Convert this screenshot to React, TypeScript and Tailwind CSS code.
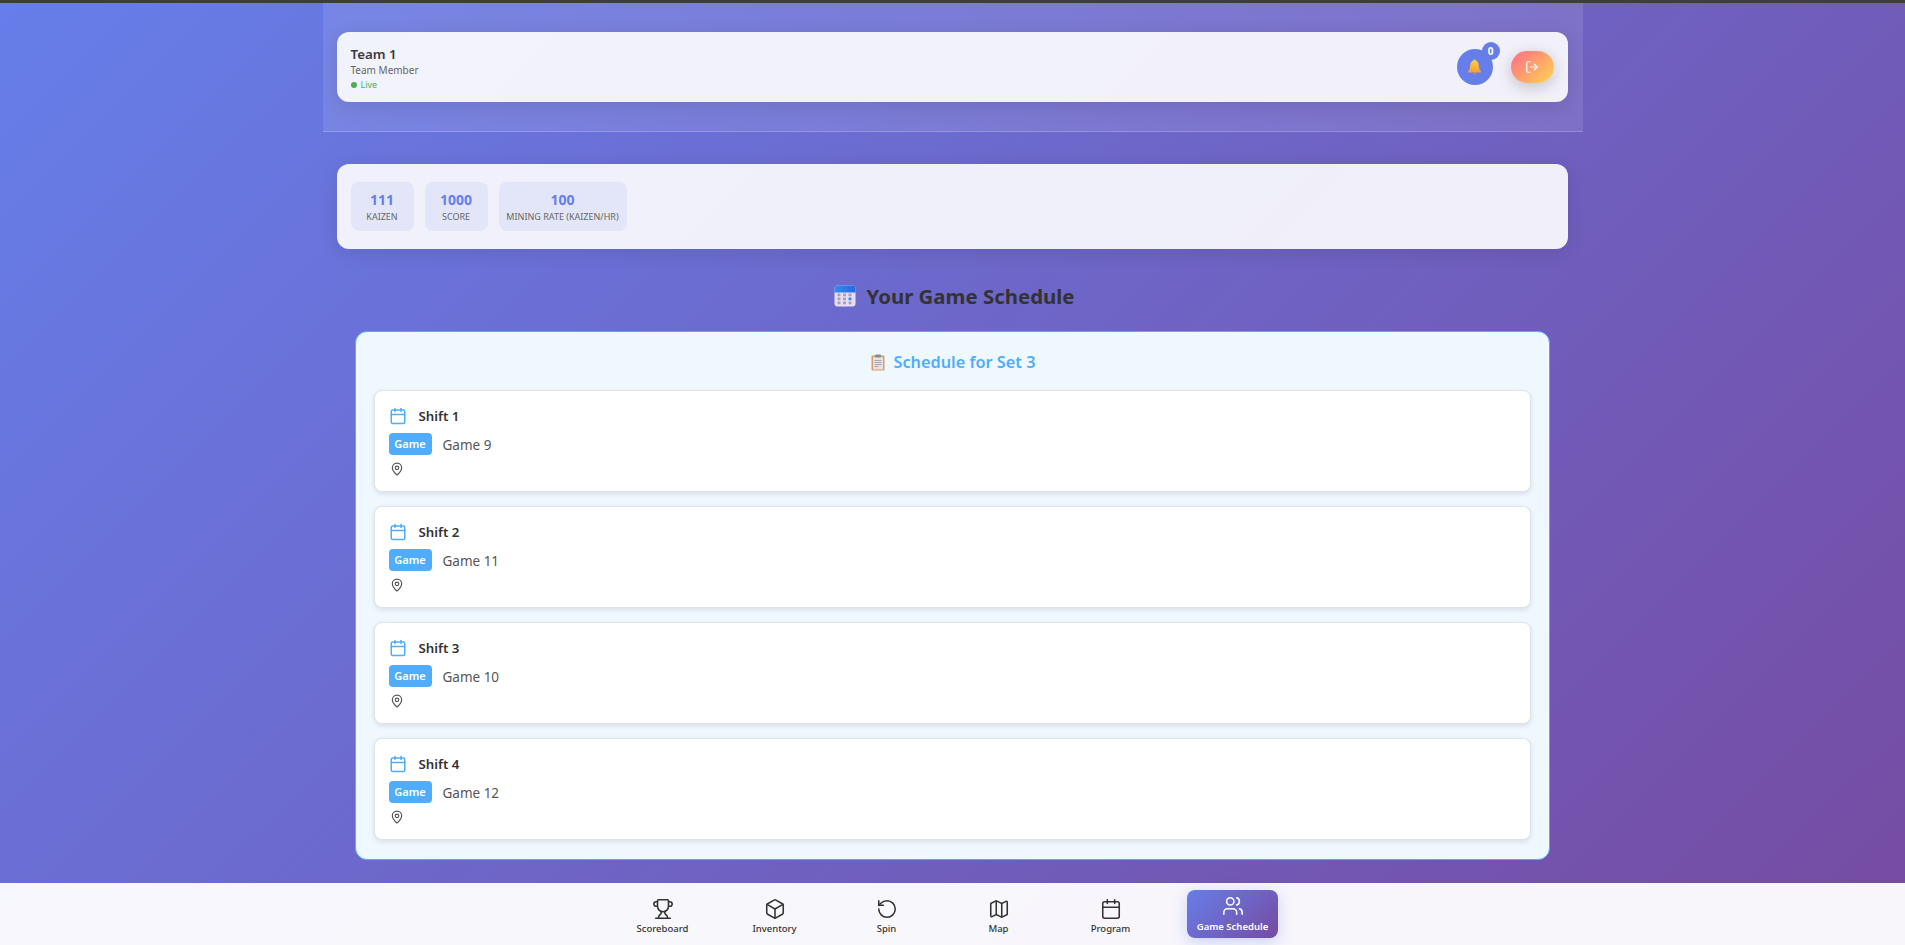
import { Calendar, Trophy, Box, RotateCcw, Map, Users, LogOut, MapPin } from "lucide-react";

const shifts = [
  { id: 1, game: "Game 9" },
  { id: 2, game: "Game 11" },
  { id: 3, game: "Game 10" },
  { id: 4, game: "Game 12" },
];

const stats = [
  { value: "111", label: "KAIZEN", width: "w-[63px]" },
  { value: "1000", label: "SCORE", width: "w-[63px]" },
  { value: "100", label: "MINING RATE (KAIZEN/HR)", width: "w-[128px]" },
];

const navItems = [
  { label: "Scoreboard", icon: Trophy },
  { label: "Inventory", icon: Box },
  { label: "Spin", icon: RotateCcw },
  { label: "Map", icon: Map },
  { label: "Program", icon: Calendar },
];

function BellEmoji() {
  return (
    <svg width="15" height="16" viewBox="0 0 14 15">
      <defs>
        <linearGradient id="bellFill" x1="0" y1="0" x2="0" y2="1">
          <stop offset="0" stopColor="#fcd34d" />
          <stop offset="1" stopColor="#f59e2c" />
        </linearGradient>
      </defs>
      <path d="M7 0.5c-.7 0-1.1.5-1.1 1C3.900 2.100 3.200 3.800 3 6c-.2 2.500-.8 4.200-2 5.600v1.100h12v-1.100C11.800 10.200 11.200 8.500 11 6c-.2-2.200-.9-3.900-2.900-4.500 0-.5-.4-1-1.100-1z" fill="url(#bellFill)" />
      <path d="M5.600 12.700h2.800c0 1.200-.6 1.800-1.400 1.800s-1.400-.6-1.400-1.800z" fill="#e8862a" />
    </svg>
  );
}

function CalendarEmoji() {
  const cols = [3.500, 9, 14.500];
  return (
    <svg width="22" height="22" viewBox="0 0 22 22">
      <defs>
        <linearGradient id="calTop" x1="0" y1="0" x2="1" y2="0">
          <stop offset="0" stopColor="#2f8ef0" />
          <stop offset="1" stopColor="#2468e8" />
        </linearGradient>
      </defs>
      <rect x="0.500" y="0.500" width="21" height="21" rx="3" fill="#e8def4" />
      <path d="M0.500 7.500V3.500a3 3 0 0 1 3-3h15a3 3 0 0 1 3 3v4z" fill="url(#calTop)" />
      {[8.500, 12.500, 16.500].map((y) =>
        cols.map((x) => (
          <rect
            key={`${y}-${x}`}
            x={x}
            y={y}
            width="3"
            height="2.800"
            rx="0.400"
            fill={y === 12.5 && x === 14.5 ? "#2f8ef0" : "#a8a0b4"}
          />
        ))
      )}
    </svg>
  );
}

function ClipboardEmoji() {
  return (
    <svg width="14" height="17" viewBox="0 0 14 17">
      <rect x="0.500" y="1.500" width="13" height="15" rx="1" fill="#d99a63" />
      <rect x="2" y="3" width="10" height="12.500" fill="#e4e2e6" />
      <rect x="4" y="0.500" width="6" height="3" rx="1" fill="#8c8a90" />
      <path d="M3.500 6.500h7M3.500 8.500h7M3.500 10.500h7M3.500 12.500h4" stroke="#aaa8ae" strokeWidth="1" />
    </svg>
  );
}

export default function App() {
  return (
    <div className="h-[945px] overflow-hidden flex flex-col bg-[linear-gradient(135deg,#667eea_0%,#764ba2_100%)] font-['Noto_Sans',sans-serif] text-[#333]">
      <div className="h-[3px] bg-[#3d3d3f] shrink-0" />

      <main className="flex-1 w-[1260px] mx-auto">
        <header className="bg-white/10 border-b border-white/20 pl-[14px] pr-[15px] pt-[29px] pb-[29px]">
          <div className="h-[70px] bg-white/90 rounded-[12px] shadow-[0_4px_20px_rgba(0,0,0,0.1)] px-[14px] flex items-center justify-between">
            <div className="flex flex-col pt-[2px]">
              <span className="text-[13.300px] leading-[18px] font-semibold text-[#3a3a3f]">Team 1</span>
              <span className="text-[10px] leading-[14px] text-[#666]">Team Member</span>
              <span className="mt-[2px] flex items-center gap-[4px] text-[9px] leading-[12px] text-[#4caf50]">
                <span className="w-[6px] h-[6px] rounded-full bg-[#4caf50]" />
                Live
              </span>
            </div>
            <div className="flex items-center gap-[18px]">
              <div className="relative w-[36px] h-[36px] rounded-full bg-[#667eea] flex items-center justify-center">
                <BellEmoji />
                <span className="absolute -top-[7px] -right-[7px] w-[18px] h-[18px] rounded-full bg-[#667eea] text-white text-[10px] font-bold flex items-center justify-center">
                  0
                </span>
              </div>
              <button className="w-[43px] h-[32px] rounded-[16px] bg-[linear-gradient(135deg,#ff6b88,#fed650)] shadow-[0_4px_15px_rgba(0,0,0,0.2)] text-white flex items-center justify-center">
                <LogOut size={14} />
              </button>
            </div>
          </div>
        </header>

        <section className="ml-[14px] mr-[15px] mt-[32px] h-[85px] bg-white/90 rounded-[12px] shadow-[0_4px_20px_rgba(0,0,0,0.1)] px-[14px] pt-[18px] flex gap-[11px]">
          {stats.map((s) => (
            <div
              key={s.label}
              className={`${s.width} h-[49px] rounded-[8px] bg-[#e2e6f8] flex flex-col items-center justify-center`}
            >
              <span className="text-[14px] leading-[18px] font-bold text-[#667eea]">{s.value}</span>
              <span className="mt-[2px] text-[9px] leading-[12px] text-[#666] whitespace-nowrap">{s.label}</span>
            </div>
          ))}
        </section>

        <h2 className="mt-[32px] h-[30px] pl-[4px] flex items-center justify-center gap-[10px] text-[20.400px] font-bold text-[#333]">
          <CalendarEmoji />
          Your Game Schedule
        </h2>

        <section className="ml-[32px] mr-[33px] mt-[20px] h-[529px] bg-[#f0f8ff] border border-[#4facfe] rounded-[12px] px-[18px] pt-[18px]">
          <h3 className="h-[24px] pl-[3px] flex items-center justify-center gap-[8px] text-[16.300px] font-semibold text-[#4facfe]">
            <ClipboardEmoji />
            Schedule for Set 3
          </h3>
          <div className="mt-[16px] flex flex-col gap-[14px]">
            {shifts.map((shift) => (
              <div
                key={shift.id}
                className="h-[102px] bg-white border border-[#dfe3e8] rounded-[8px] shadow-[0_2px_5px_rgba(0,0,0,0.1)] px-[14px] pt-[16px]"
              >
                <div className="flex items-center gap-[12px] h-[20px]">
                  <Calendar size={18} className="text-[#4facfe] -translate-y-px" />
                  <span className="text-[13.300px] font-semibold text-[#333]">Shift {shift.id}</span>
                </div>
                <div className="mt-[7px] flex items-center gap-[11px] h-[22px]">
                  <span className="w-[43px] h-[22px] -translate-y-px rounded-[4px] bg-[#4facfe] text-white text-[11px] font-semibold flex items-center justify-center">
                    Game
                  </span>
                  <span className="text-[13.500px] text-[#555]">{shift.game}</span>
                </div>
                <div className="mt-[6px] pl-[1px]">
                  <MapPin size={14} className="text-[#555]" />
                </div>
              </div>
            ))}
          </div>
        </section>
      </main>

      <nav className="h-[62px] shrink-0 bg-white/95 flex justify-center items-center gap-[21px] pr-[10px]">
        {navItems.map(({ label, icon: Icon }) => (
          <div key={label} className="w-[91px] h-[48px] pt-[5px] flex flex-col items-center justify-center text-[#333]">
            <Icon size={22} strokeWidth={1.700} />
            <span className="text-[9.500px] leading-[14px] font-medium mt-[2px] whitespace-nowrap">{label}</span>
          </div>
        ))}
        <div className="ml-[10px] w-[91px] h-[48px] rounded-[8px] bg-[linear-gradient(135deg,#667eea,#764ba2)] shadow-[0_4px_15px_rgba(102,126,234,0.3)] text-white flex flex-col items-center justify-center">
          <Users size={22} strokeWidth={1.700} />
          <span className="text-[9.500px] leading-[14px] font-semibold mt-[3px] whitespace-nowrap">Game Schedule</span>
        </div>
      </nav>
    </div>
  );
}
